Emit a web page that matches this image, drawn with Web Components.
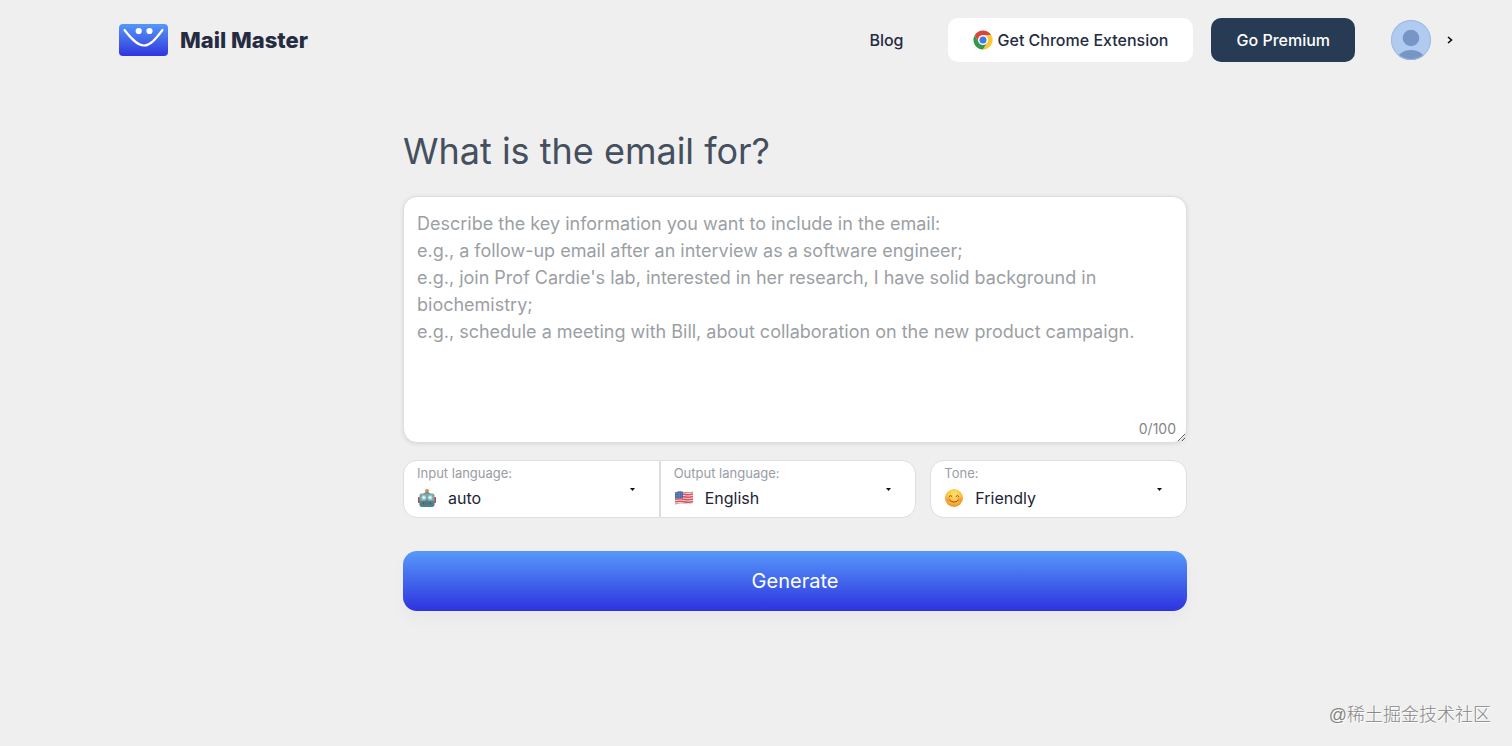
<!DOCTYPE html>
<html lang="en">
<head>
<meta charset="utf-8">
<meta name="viewport" content="width=device-width, initial-scale=1">
<title>Mail Master</title>
<style>
body {
  margin: 0;
  min-height: 100vh;
  background: #efefef;
  color: #1f2937;
  font-family: Inter, "Liberation Sans", sans-serif;
}
</style>
</head>
<body>
<mail-app></mail-app>

<script>
const base = `
<style>
* {
  box-sizing: border-box;
}

button, select, textarea {
  margin: 0;
  font-family: inherit;
}

svg {
  display: block;
  flex: none;
}
</style>
`

const icons = {
  robot: `
    <svg width="20" height="20" viewBox="0 0 20 20" aria-hidden="true">
      <circle cx="10" cy="3" r="2" fill="#e08a3c"/>
      <path d="M5 7Q10 1 15 7Z" fill="#6d7f86"/>
      <rect x="1" y="9" width="3" height="6" rx="1" fill="#b8434f"/>
      <rect x="16" y="9" width="3" height="6" rx="1" fill="#b8434f"/>
      <path d="M4.500 5.500h11q2 0 2 2V16q0 3-3 3h-9q-3 0-3-3V7.500q0-2 2-2Z" fill="#7ba7aa"/>
      <path d="M2.500 13h15v3q0 3-3 3h-9q-3 0-3-3Z" fill="#4c838c"/>
      <circle cx="6.800" cy="9.500" r="2.300" fill="#a9dbe3"/>
      <circle cx="13.200" cy="9.500" r="2.300" fill="#a9dbe3"/>
      <circle cx="6.800" cy="9.500" r="1" fill="#f4ffff"/>
      <circle cx="13.200" cy="9.500" r="1" fill="#f4ffff"/>
      <path d="M10 11l1 2H9Z" fill="#b0503c"/>
      <rect x="6" y="14.500" width="8" height="2" rx="1" fill="#2f5661"/>
      <path d="M8 14.500v2M10 14.500v2M12 14.500v2" stroke="#a9cdd1" stroke-width=".6"/>
    </svg>`,
  flag: `
    <svg width="20" height="20" viewBox="0 0 20 20" aria-hidden="true">
      <clipPath id="wave"><path d="M1 4.500Q5.500 2.800 10 4t9-.5v11.500q-4.500 1.500-9 .5T1 16.500Z"/></clipPath>
      <g clip-path="url(#wave)">
        <path d="M0 0h20v20H0Z" fill="#f1dfe2"/>
        <path d="M0 4.200q5-1.700 10-.5t10-.5M0 6.700q5-1.700 10-.5t10-.5M0 9.200q5-1.700 10-.5t10-.5M0 11.700q5-1.700 10-.5t10-.5M0 14.200q5-1.700 10-.5t10-.5M0 16.700q5-1.700 10-.5t10-.5" fill="none" stroke="#d5525f" stroke-width="1.400"/>
        <path d="M0 2h9v8.300q-4.500-.8-9 .7Z" fill="#4668a8"/>
        <path d="M2 5.500h6M2 7.300h6M2 9.100h6" stroke="#c3d0e8" stroke-width=".6" stroke-dasharray=".7 1"/>
      </g>
    </svg>`,
  smile: `
    <svg width="20" height="20" viewBox="0 0 20 20" aria-hidden="true">
      <defs>
        <radialGradient id="skin" cx=".5" cy=".3" r=".7">
          <stop offset="0" stop-color="#ffe36b"/>
          <stop offset=".6" stop-color="#fbc03f"/>
          <stop offset="1" stop-color="#ea8f25"/>
        </radialGradient>
      </defs>
      <circle cx="10" cy="10" r="9" fill="url(#skin)"/>
      <circle cx="4.500" cy="11.500" r="2.200" fill="#f2844a" opacity=".55"/>
      <circle cx="15.500" cy="11.500" r="2.200" fill="#f2844a" opacity=".55"/>
      <path d="M5.200 8.500q1.400-2.400 2.800 0M12 8.500q1.400-2.400 2.800 0M6 12.500q4 3.400 8 0" fill="none" stroke="#8a5220" stroke-width="1" stroke-linecap="round"/>
    </svg>`,
}

class MailLogo extends HTMLElement {
  constructor() {
    super()
    this.attachShadow({ mode: "open" })
  }

  connectedCallback() {
    this.shadowRoot.innerHTML = `
    ${base}
    <style>
    :host {
      display: block;
    }

    a {
      display: flex;
      align-items: center;
      gap: 12px;
      color: #252c42;
      font-size: 22px;
      font-weight: 800;
      line-height: 32px;
      text-decoration: none;
      white-space: nowrap;
    }
    </style>
    <a href="#">
      <svg width="49" height="32" viewBox="0 0 49 32" aria-hidden="true">
        <defs>
          <linearGradient id="fill" x1="0" y1="0" x2="0" y2="1">
            <stop offset="0" stop-color="#5797f8"/>
            <stop offset="1" stop-color="#2f36de"/>
          </linearGradient>
        </defs>
        <rect width="49" height="32" rx="4" fill="url(#fill)"/>
        <circle cx="19.700" cy="7" r="3.100" fill="#fff"/>
        <circle cx="30.500" cy="7" r="3.100" fill="#fff"/>
        <path d="M5.500 6C11 13 18 21.500 25 21.500S38 13 43.500 6" fill="none" stroke="#fff" stroke-width="2.200" stroke-linecap="round"/>
      </svg>
      <slot></slot>
    </a>
    `
  }
}

class UserMenu extends HTMLElement {
  constructor() {
    super()
    this.attachShadow({ mode: "open" })
  }

  connectedCallback() {
    this.shadowRoot.innerHTML = `
    ${base}
    <style>
    :host {
      display: block;
    }

    button {
      display: flex;
      align-items: center;
      gap: 16px;
      padding: 0;
      border: 0;
      background: none;
      cursor: pointer;
    }
    </style>
    <button type="button" aria-label="Account">
      <svg width="40" height="40" viewBox="0 0 40 40" aria-hidden="true">
        <clipPath id="round"><circle cx="20" cy="20" r="20"/></clipPath>
        <g clip-path="url(#round)">
          <path d="M0 0h40v40H0Z" fill="#b0cbef"/>
          <circle cx="20" cy="18" r="8.300" fill="#7896c5"/>
          <ellipse cx="20" cy="40" rx="14" ry="10" fill="#7896c5"/>
        </g>
        <circle cx="20" cy="20" r="19.500" fill="none" stroke="#9fb9dd"/>
      </svg>
      <svg width="6" height="8" viewBox="0 0 6 8" aria-hidden="true">
        <path d="M1 1l3.500 3L1 7" fill="none" stroke="#000" stroke-width="1.500"/>
      </svg>
    </button>
    `
  }
}

class SiteHeader extends HTMLElement {
  constructor() {
    super()
    this.attachShadow({ mode: "open" })
  }

  connectedCallback() {
    this.shadowRoot.innerHTML = `
    ${base}
    <style>
    :host {
      display: block;
    }

    header, nav {
      display: flex;
      align-items: center;
    }

    header {
      justify-content: space-between;
      padding: 18px 59px 0 119px;
    }

    nav a {
      color: #252c42;
      font-size: 16px;
      font-weight: 500;
      text-decoration: none;
      white-space: nowrap;
    }

    nav .blog {
      margin-right: 44px;
    }

    nav .button {
      display: flex;
      align-items: center;
      gap: 5px;
      height: 44px;
      padding: 0 25px;
      border-radius: 10px;
      background: #fff;
    }

    nav .premium {
      margin: 0 36px 0 18px;
      background: #283b54;
      color: #fff;
    }
    </style>
    <header>
      <mail-logo>Mail Master</mail-logo>
      <nav>
        <a class="blog" href="#">Blog</a>
        <a class="button" href="#">
          <svg width="20" height="20" viewBox="0 0 48 48" aria-hidden="true">
            <circle cx="24" cy="24" r="23" fill="#fff"/>
            <path d="M4.100 12.500A23 23 0 0 1 43.900 12.500H24A11.500 11.500 0 0 0 14 29.700Z" fill="#dc4437"/>
            <path d="M43.900 12.500A23 23 0 0 1 24 47L34 29.700A11.500 11.500 0 0 0 24 12.500Z" fill="#fcc934"/>
            <path d="M24 47A23 23 0 0 1 4.100 12.500L14 29.700A11.500 11.500 0 0 0 34 29.700Z" fill="#34984f"/>
            <circle cx="24" cy="24" r="11.500" fill="#fff"/>
            <circle cx="24" cy="24" r="8.500" fill="#3f7be8"/>
          </svg>
          Get Chrome Extension
        </a>
        <a class="button premium" href="#">Go Premium</a>
        <user-menu></user-menu>
      </nav>
    </header>
    `
  }
}

class PromptBox extends HTMLElement {
  constructor() {
    super()
    this.attachShadow({ mode: "open" })
  }

  connectedCallback() {
    const max = this.getAttribute("max")

    this.shadowRoot.innerHTML = `
    ${base}
    <style>
    :host {
      display: block;
    }

    label {
      display: block;
      margin-bottom: 21px;
      color: #454f5e;
      font-size: 36px;
      line-height: 48px;
    }

    .box {
      position: relative;
    }

    textarea {
      display: block;
      width: 100%;
      height: 247px;
      padding: 13px;
      border: 1px solid #dcdee0;
      border-radius: 14px;
      outline: none;
      background: #fff;
      box-shadow: 0 1px 4px rgba(0, 0, 0, 0.1);
      color: #1f2937;
      font-size: 18px;
      line-height: 27px;
      resize: vertical;
    }

    textarea::placeholder {
      color: #9b9fa5;
      opacity: 1;
    }

    .count {
      position: absolute;
      right: 11px;
      bottom: 4px;
      color: #858585;
      font-size: 14px;
      line-height: 20px;
    }
    </style>
    <label for="prompt"><slot></slot></label>
    <div class="box">
      <textarea id="prompt" maxlength="${max}"></textarea>
      <span class="count">0/${max}</span>
    </div>
    `

    const textarea = this.shadowRoot.getElementById("prompt")
    const count = this.shadowRoot.querySelector(".count")

    textarea.placeholder = [
      "Describe the key information you want to include in the email:",
      "e.g., a follow-up email after an interview as a software engineer;",
      "e.g., join Prof Cardie's lab, interested in her research, I have solid background in biochemistry;",
      "e.g., schedule a meeting with Bill, about collaboration on the new product campaign.",
    ].join("\n")

    textarea.addEventListener("input", () => {
      count.textContent = `${textarea.value.length}/${max}`
    })
  }
}

class SelectField extends HTMLElement {
  constructor() {
    super()
    this.attachShadow({ mode: "open" })
  }

  connectedCallback() {
    const options = this.getAttribute("options").split(",")

    this.shadowRoot.innerHTML = `
    ${base}
    <style>
    :host {
      display: flex;
      flex: 1;
      align-items: center;
      min-width: 0;
      padding: 0 24px 0 13px;
      border: 1px solid #dcdee1;
      border-radius: var(--corners, 14px);
      background: #fff;
    }

    .field {
      flex: 1;
      min-width: 0;
      padding: 2px 0 5px;
    }

    label {
      display: block;
      color: #999da5;
      font-size: 13px;
      line-height: 20px;
    }

    .value {
      display: flex;
      align-items: center;
      gap: 11px;
      padding-top: 1px;
    }

    select {
      flex: 1;
      min-width: 0;
      height: 28px;
      padding: 0;
      border: 0;
      outline: none;
      appearance: none;
      background: none;
      color: #1c2436;
      font-size: 16px;
    }
    </style>
    <div class="field">
      <label for="choice">${this.getAttribute("label")}</label>
      <div class="value">
        ${icons[this.getAttribute("icon")]}
        <select id="choice">
          ${options.map((option) => `<option>${option}</option>`).join("")}
        </select>
      </div>
    </div>
    <svg width="5" height="3" viewBox="0 0 5 3" aria-hidden="true">
      <path d="M0 0h5L2.500 3Z" fill="#111"/>
    </svg>
    `
  }
}

class MailForm extends HTMLElement {
  constructor() {
    super()
    this.attachShadow({ mode: "open" })
  }

  connectedCallback() {
    this.shadowRoot.innerHTML = `
    ${base}
    <style>
    :host {
      display: block;
      width: 100%;
      max-width: 784px;
      margin: 65px auto 0;
    }

    .options {
      display: grid;
      grid-template-columns: 2fr 1fr;
      gap: 14px;
      margin: 17px 0 33px;
    }

    .pair {
      display: flex;
    }

    .first {
      --corners: 14px 0 0 14px;
    }

    .second {
      --corners: 0 14px 14px 0;
    }

    button {
      display: block;
      width: 100%;
      height: 60px;
      border: 0;
      border-radius: 14px;
      background: linear-gradient(#5799fa, #2d33df);
      box-shadow: 0 8px 16px rgba(0, 0, 0, 0.03);
      color: #fff;
      font-size: 20px;
      cursor: pointer;
    }
    </style>
    <form>
      <prompt-box max="100">What is the email for?</prompt-box>
      <div class="options">
        <div class="pair">
          <select-field class="first" label="Input language:" icon="robot" options="auto"></select-field>
          <select-field class="second" label="Output language:" icon="flag" options="English"></select-field>
        </div>
        <select-field label="Tone:" icon="smile" options="Friendly"></select-field>
      </div>
      <button type="submit">Generate</button>
    </form>
    `

    this.shadowRoot.querySelector("form").addEventListener("submit", (e) => {
      e.preventDefault()
    })
  }
}

class MailApp extends HTMLElement {
  constructor() {
    super()
    this.attachShadow({ mode: "open" })
  }

  connectedCallback() {
    this.shadowRoot.innerHTML = `
    ${base}
    <style>
    :host {
      display: flex;
      flex-direction: column;
      min-height: 100vh;
      box-sizing: border-box;
    }

    main {
      flex: 1;
      padding: 0 41px 0 119px;
    }

    footer {
      padding: 0 21px 17px;
      color: #868686;
      font-family: "Liberation Sans", "Noto Sans CJK SC", sans-serif;
      font-size: 18px;
      font-weight: 300;
      line-height: 27px;
      text-align: right;
      text-shadow: 1px 1px 0 #fff;
    }
    </style>
    <site-header></site-header>
    <main><mail-form></mail-form></main>
    <footer>@稀土掘金技术社区</footer>
    `
  }
}

window.customElements.define("mail-logo", MailLogo)
window.customElements.define("user-menu", UserMenu)
window.customElements.define("site-header", SiteHeader)
window.customElements.define("prompt-box", PromptBox)
window.customElements.define("select-field", SelectField)
window.customElements.define("mail-form", MailForm)
window.customElements.define("mail-app", MailApp)
</script>
</body>
</html>
